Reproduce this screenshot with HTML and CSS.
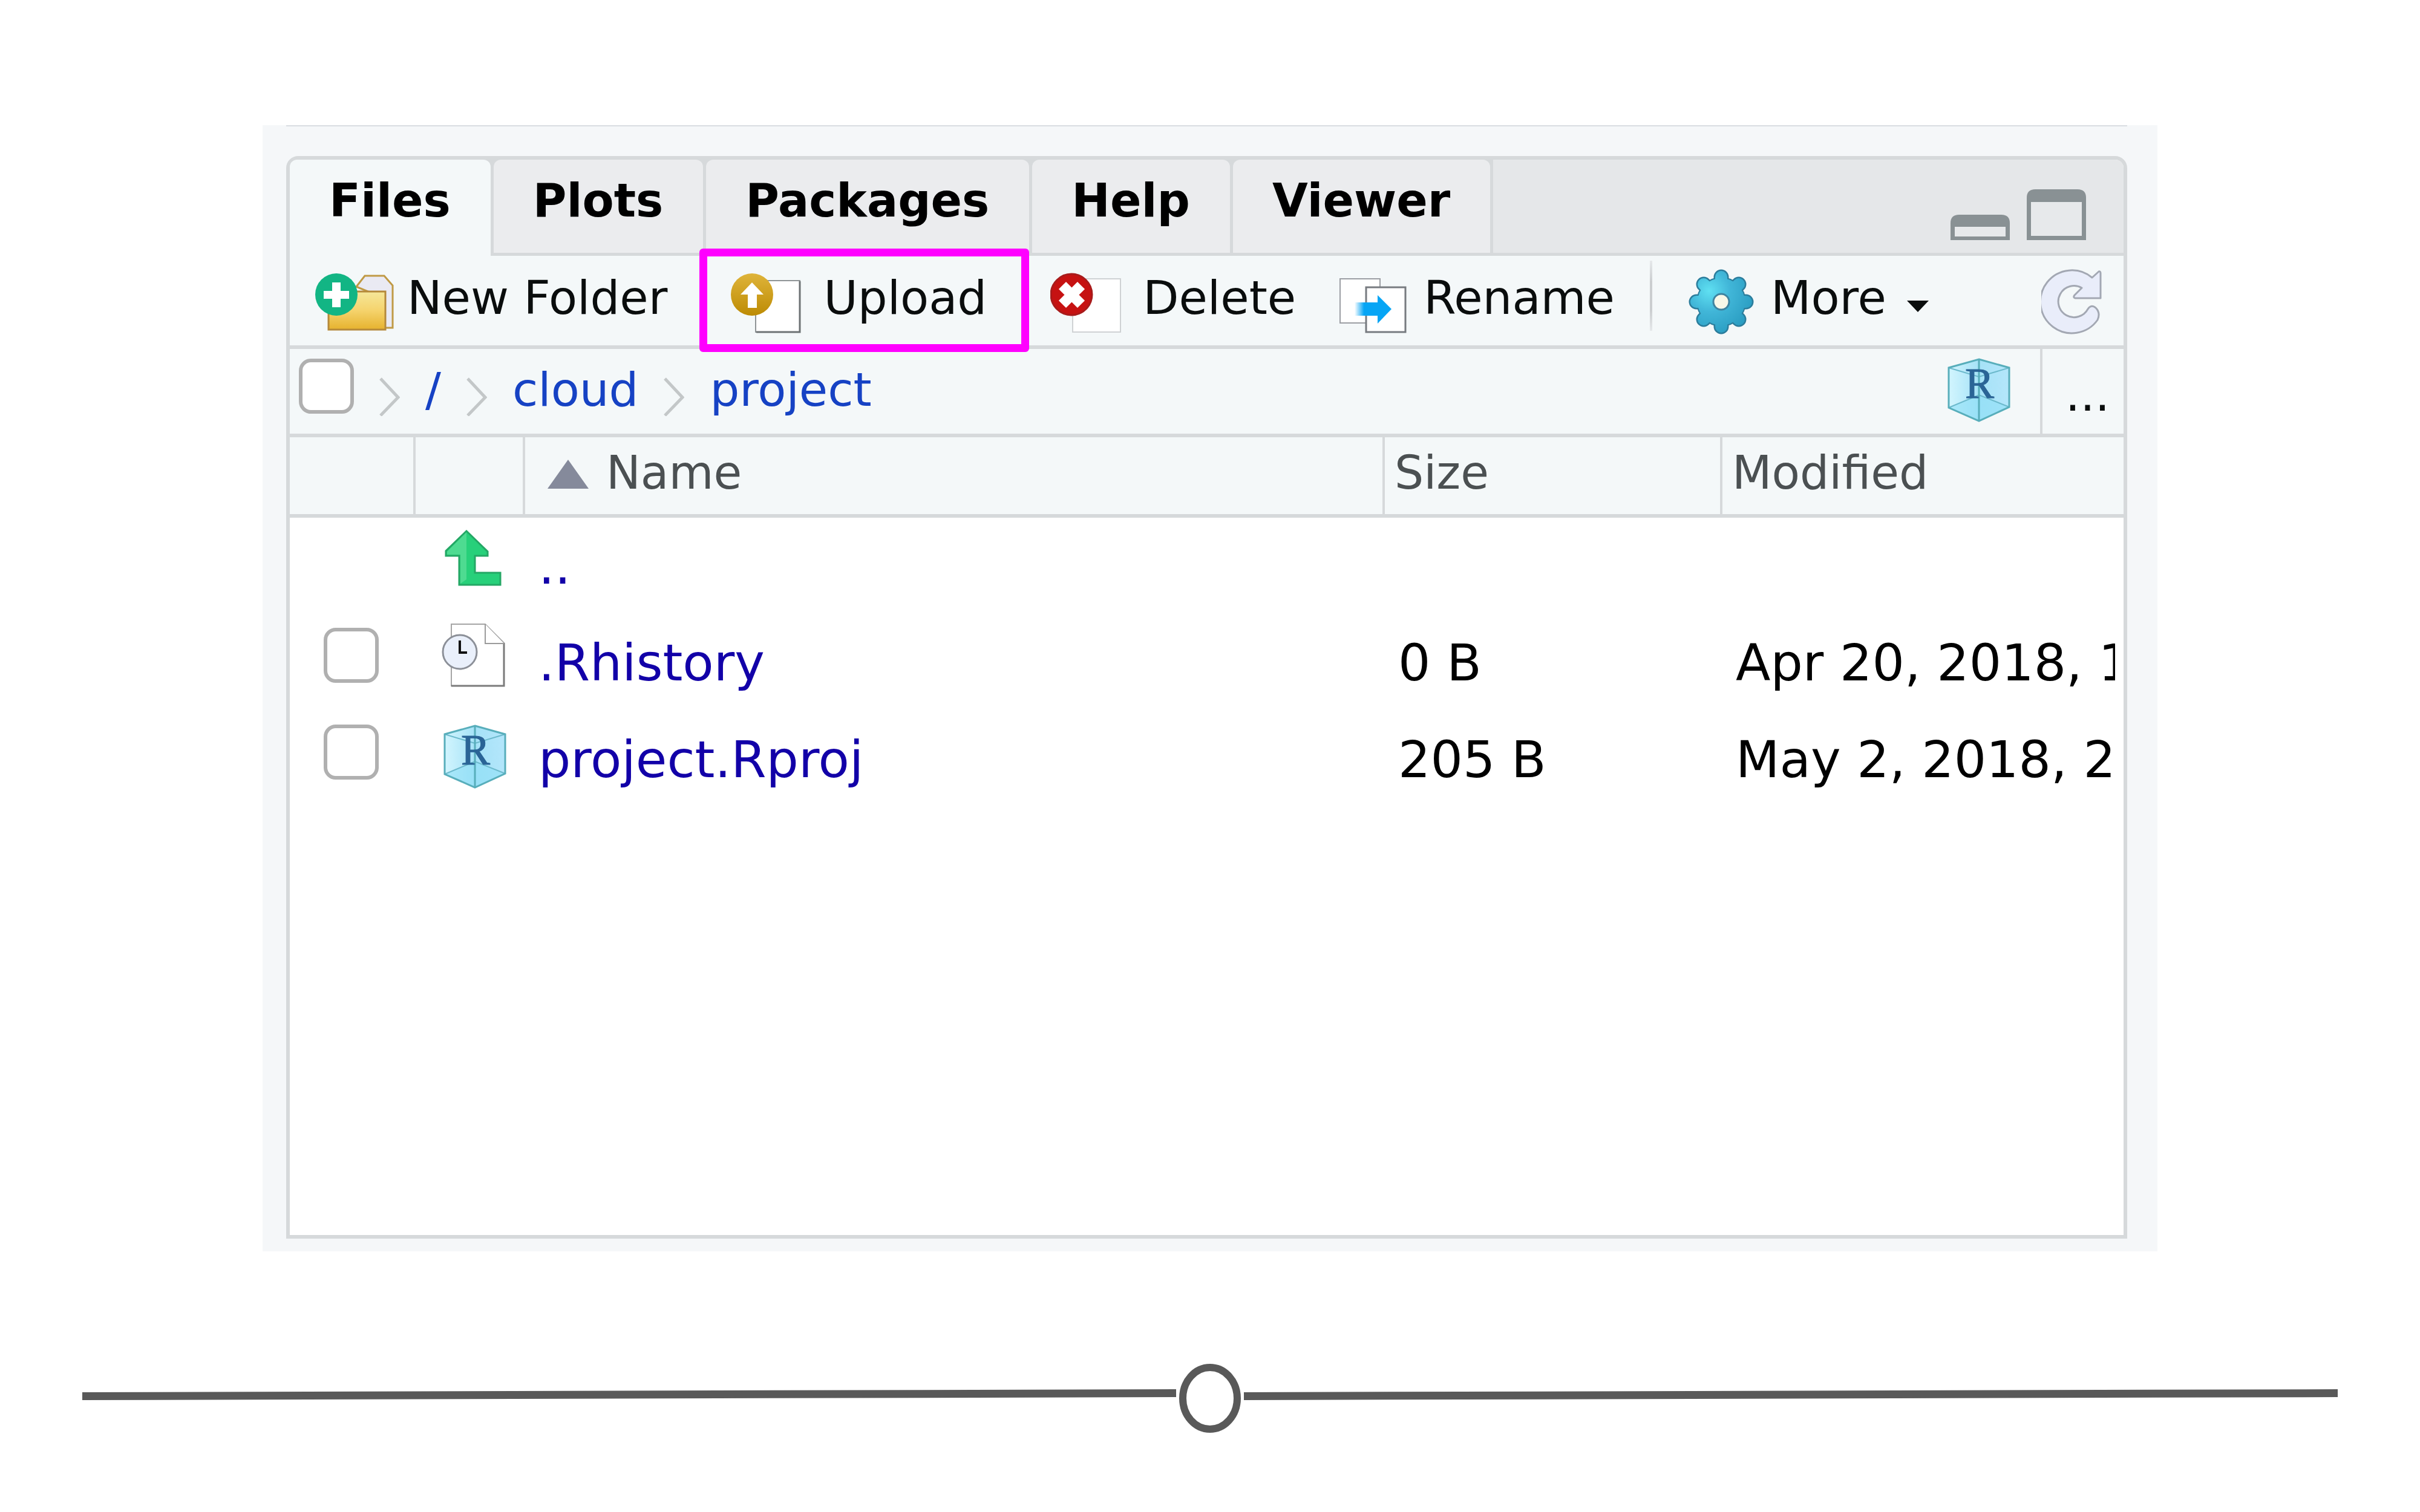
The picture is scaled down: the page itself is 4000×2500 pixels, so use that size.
FILE: index.html
```html
<!DOCTYPE html>
<html lang="en">
<head>
<meta charset="utf-8">
<title>Files pane</title>
<link rel="stylesheet" href="styles.css">
</head>
<body>
<svg class="defs" aria-hidden="true">
  <defs>
    <linearGradient id="folder" x1="0" y1="0" x2="0" y2="1"><stop offset="0" stop-color="#f5e79a"/><stop offset="0.5" stop-color="#f5d36c"/><stop offset="1" stop-color="#e6b22e"/></linearGradient>
    <linearGradient id="gold" x1="0" y1="0" x2="0" y2="1"><stop offset="0" stop-color="#dfb43a"/><stop offset="1" stop-color="#bd8b04"/></linearGradient>
    <linearGradient id="fade" x1="0" y1="0" x2="1" y2="0"><stop offset="0" stop-color="#06a5f5" stop-opacity="0"/><stop offset="0.4" stop-color="#06a5f5"/></linearGradient>
    <radialGradient id="gear" gradientUnits="userSpaceOnUse" cx="36" cy="50" r="76"><stop offset="0" stop-color="#5fe0f2"/><stop offset="0.45" stop-color="#41b6d8"/><stop offset="1" stop-color="#2a9dc2"/></radialGradient>
    <linearGradient id="ice" x1="0" y1="0" x2="1" y2="0"><stop offset="0" stop-color="#d2f5fe"/><stop offset="0.5" stop-color="#a5e2f7"/><stop offset="1" stop-color="#b4e6fb"/></linearGradient>
    <symbol id="cube" viewBox="0 0 104 106">
      <path d="M52 2 102 16V81L52 104 2 82V16Z" fill="url(#ice)"/>
      <path d="M52 61 102 81 52 104 2 82Z" fill="#8fe0f6" opacity=".6"/>
      <path d="M2 16 52 31 102 16M2 82 52 61 102 81" fill="none" stroke="#6cb9cc" stroke-width="2"/>
      <path d="M52 2 102 16V81L52 104 2 82V16ZM52 2V104" fill="none" stroke="#58aebb" stroke-width="3"/>
      <text class="cube-letter" x="53" y="66" text-anchor="middle">R</text>
    </symbol>
    <symbol id="chevron" viewBox="0 0 34 82"><path d="M2 20 31 51 2 81" fill="none" stroke="#c3c7c8" stroke-width="5"/></symbol>
  </defs>
</svg>

<main class="frame">
  <section class="pane">
    <nav class="tabs" aria-label="Panes">
      <div class="tab-slot"><button class="tab tab-active" type="button">Files</button></div>
      <div class="tab-slot"><button class="tab" type="button">Plots</button></div>
      <div class="tab-slot"><button class="tab" type="button">Packages</button></div>
      <div class="tab-slot"><button class="tab" type="button">Help</button></div>
      <div class="tab-slot"><button class="tab" type="button">Viewer</button></div>
      <div class="window-controls">
        <button type="button" aria-label="Minimize"><svg width="98" height="42" viewBox="0 0 98 42"><path d="M0 42V14Q0 0 14 0H84Q98 0 98 14V42Z" fill="#899194"/><path d="M7 20H91V36H7Z" fill="#e7e9eb"/></svg></button>
        <button type="button" aria-label="Maximize"><svg width="98" height="84" viewBox="0 0 98 84"><path d="M0 84V14Q0 0 14 0H84Q98 0 98 14V84Z" fill="#899194"/><path d="M7 21H91V77H7Z" fill="#e7e9eb"/></svg></button>
      </div>
    </nav>

    <div class="toolbar">
      <button class="tool tool-wide" type="button">
        <svg width="153" height="124" viewBox="0 0 153 124">
          <path d="M69 43 83 25H115L129 41V111H110V60Z" fill="#eaeaf3" stroke="#c09a45" stroke-width="3"/>
          <path d="M23 51H117V114H23Z" fill="url(#folder)" stroke="#b5893a" stroke-width="3"/>
          <circle cx="36" cy="56" r="35" fill="#12b584"/>
          <path d="M29 36H43V50H57V63H43V77H29V63H15V50H29Z" fill="#fff"/>
        </svg>New Folder</button>
      <button class="tool tool-wide tool-marked" type="button">
        <svg width="153" height="124" viewBox="0 0 153 124">
          <path d="M41 33H114V118H41Z" fill="#fff"/><path d="M41 33H114V118H41V33" fill="none" stroke="#8f9496" stroke-width="2"/><path d="M114 34V118H42" fill="none" stroke="#6d7274" stroke-width="3"/>
          <circle cx="35" cy="56" r="35" fill="url(#gold)"/>
          <path d="M35 36 54 56H43V78H28V56H16Z" fill="#fff"/>
        </svg>Upload</button>
      <button class="tool" type="button">
        <svg width="153" height="124" viewBox="0 0 153 124">
          <path d="M37 30H116V118H37Z" fill="#fff" stroke="#cfd2d4" stroke-width="2"/>
          <circle cx="35" cy="56" r="34" fill="#c61212" stroke="#a81c1c" stroke-width="3"/>
          <path d="M20 41 51 72M51 41 20 72" stroke="#fff" stroke-width="17"/>
        </svg>Delete</button>
      <button class="tool tool-rename" type="button">
        <svg width="139" height="124" viewBox="0 0 139 124">
          <path d="M1 30H67V103H1Z" fill="#fff" stroke="#9b9ea3" stroke-width="2"/>
          <path d="M44 44H109V118H44Z" fill="#fff" stroke="#777b80" stroke-width="3"/>
          <path d="M25 69H64V91H25Z" fill="url(#fade)"/><path d="M63 57 86 80 63 104Z" fill="#06a5f5"/>
        </svg>Rename</button>
      <span class="divider"></span>
      <button class="tool" type="button">
        <svg width="138" height="130" viewBox="0 -3 138 130">
          <g stroke="#2b7d9c" stroke-width="25" stroke-linecap="round"><path d="M56 27V109M15 68H97M27 39 85 97M85 39 27 97"/></g>
          <circle cx="56" cy="68" r="41" fill="#2b7d9c"/>
          <g stroke="url(#gear)" stroke-width="20" stroke-linecap="round"><path d="M56 27 56.1 109M15 68 97 68.1M27 39 85 97M85 39 27 97"/></g>
          <circle cx="56" cy="68" r="39" fill="url(#gear)"/>
          <circle cx="56" cy="68" r="13" fill="#f8f8e8" stroke="#3f84a0" stroke-width="3"/>
        </svg>More<svg class="caret" width="36" height="56" viewBox="0 0 36 56"><path d="M0 32H36L18 51Z" fill="#0a0d0d"/></svg></button>
      <button class="tool tool-refresh" type="button" aria-label="Refresh">
        <svg width="100" height="124" viewBox="0 0 100 124"><path d="M84 28 95 18Q98 17 98 21V62H56Q52 61 55 57L67 45A26 26 0 1 0 77 80Q83 71 91 79 98 87 93 98A52 52 0 1 1 84 28Z" fill="#e9edfa" stroke="#a3a8b3" stroke-width="3" stroke-linejoin="round"/></svg>
      </button>
    </div>

    <div class="pathbar">
      <input class="check" type="checkbox" aria-label="Select all files">
      <svg width="34" height="82"><use href="#chevron"/></svg>
      <a href="#root">/</a>
      <svg width="34" height="82"><use href="#chevron"/></svg>
      <a href="#cloud">cloud</a>
      <svg width="34" height="82"><use href="#chevron"/></svg>
      <a href="#project">project</a>
      <div class="path-actions">
        <button class="project-button" type="button" aria-label="Go to project folder"><svg width="104" height="106"><use href="#cube"/></svg></button>
        <button class="browse" type="button">...</button>
      </div>
    </div>

    <table class="files">
      <colgroup><col class="col-check"><col class="col-icon"><col class="col-name"><col class="col-size"><col></colgroup>
      <thead>
        <tr>
          <th></th><th></th>
          <th class="sorted"><svg width="68" height="48" viewBox="0 0 68 48"><path d="M34 0 68 48H0Z" fill="#858a9b"/></svg>Name</th>
          <th>Size</th><th>Modified</th>
        </tr>
      </thead>
      <tbody>
        <tr>
          <td></td>
          <td class="icon"><svg width="106" height="106" viewBox="0 0 106 106"><path d="M41 8 76 42V49H55V77H97V97H29V49H7V41Z" fill="#27d07a" stroke="#24a765" stroke-width="3"/><path d="M41 10V88L31 95V47H9V42Z" fill="#5fe09b" opacity=".7"/></svg></td>
          <td><a href="#up">..</a></td><td></td><td></td>
        </tr>
        <tr>
          <td class="select"><input class="check" type="checkbox" aria-label="Select .Rhistory"></td>
          <td class="icon"><svg width="106" height="106" viewBox="0 0 106 106"><path d="M16 2H72L103 33V104H16Z" fill="#fff" stroke="#a5a5a5" stroke-width="2"/><path d="M103 33V104H16" fill="none" stroke="#7b7b7b" stroke-width="3"/><path d="M72 2V34H103" fill="#fff" stroke="#9b9b9b" stroke-width="2"/><circle cx="30" cy="48" r="28" fill="#eaf0fb" stroke="#8c9098" stroke-width="3"/><path d="M30 29V49H42" fill="none" stroke="#111" stroke-width="4"/></svg></td>
          <td><a href="#rhistory">.Rhistory</a></td><td>0 B</td><td><div class="clip">Apr 20, 2018, 1</div></td>
        </tr>
        <tr>
          <td class="select"><input class="check" type="checkbox" aria-label="Select project.Rproj"></td>
          <td class="icon icon-project"><svg width="104" height="106"><use href="#cube"/></svg></td>
          <td><a href="#rproj">project.Rproj</a></td><td>205 B</td><td><div class="clip">May 2, 2018, 2</div></td>
        </tr>
      </tbody>
    </table>
  </section>
</main>

<footer class="rule">
  <svg class="rule-line" height="18" viewBox="0 0 100 18" preserveAspectRatio="none"><path d="M0 5 100 0V13L0 18Z" fill="#595959"/></svg>
  <svg width="102" height="114" viewBox="0 0 102 114"><ellipse cx="51" cy="57" rx="45" ry="51" fill="none" stroke="#595959" stroke-width="12"/></svg>
  <svg class="rule-line" height="18" viewBox="0 0 100 18" preserveAspectRatio="none"><path d="M0 5 100 0V13L0 18Z" fill="#595959"/></svg>
</footer>
</body>
</html>
```
FILE: styles.css
```css
* { box-sizing: border-box; }

body {
  margin: 0;
  min-height: 100vh;
  padding-top: 207px;
  background: #fff;
  color: #0a0d0d;
  font-family: "DejaVu Sans", sans-serif;
  font-size: 77px;
  line-height: 88px;
}

button {
  margin: 0;
  padding: 0;
  border: 0;
  background: none;
  color: inherit;
  font: inherit;
}

a { text-decoration: none; }
svg { display: block; flex: none; }
.defs { position: absolute; width: 0; height: 0; }

.cube-letter {
  fill: #2a6496;
  stroke: #2a6496;
  stroke-width: 1px;
  font-family: "Liberation Serif", serif;
  font-size: 72px;
}

.frame {
  margin: 0 434px;
  padding: 0 50px 21px 39px;
  background: #f5f7f9;
}

.frame::before {
  content: "";
  display: block;
  height: 2px;
  margin-bottom: 49px;
  background: #d9dde1;
}

.pane {
  min-height: 1790px;
  border: 6px solid #d6d9db;
  border-radius: 20px 20px 0 0;
  background: #fff;
}

/* Tab strip */
.tabs {
  display: flex;
  height: 159px;
  border-radius: 14px 14px 0 0;
  background: #e5e7e9;
  font-size: 76px;
}

.tab-slot { display: flex; background: #d6d9db; }

.tab {
  padding: 0 66px 18px 65px;
  margin: 0 5px 5px 0;
  border-radius: 12px 12px 0 0;
  background: #ebecee;
  color: #000;
  font-weight: bold;
}

.tab-active { margin-bottom: 0; padding-bottom: 23px; background: #f4f8f9; }

.window-controls {
  display: flex;
  flex: 1;
  justify-content: flex-end;
  align-items: flex-end;
  gap: 28px;
  padding: 0 62px 21px 0;
  border-bottom: 5px solid #d6d9db;
}

/* Toolbar */
.toolbar {
  display: flex;
  align-items: stretch;
  gap: 58px;
  height: 154px;
  padding: 0 36px 0 41px;
  border-bottom: 6px solid #d6d9db;
  background: #f4f8f9;
}

.tool {
  position: relative;
  display: flex;
  align-items: center;
  padding-bottom: 8px;
  white-space: nowrap;
}

.tool-wide { margin-right: 47px; }
.tool-rename { margin-left: 14px; }
.tool-refresh { margin-left: auto; }
.caret { margin-left: 34px; }

.tool-marked::after {
  content: "";
  position: absolute;
  inset: -12px -70px -11px -52px;
  border: 13px solid #f0f;
  border-radius: 6px;
  pointer-events: none;
}

.divider {
  width: 4px;
  margin: 8px 0 24px;
  background: linear-gradient(#e6e9eb, #cbced0 30%, #cbced0 70%, #e6e9eb);
}

/* Path bar */
.pathbar {
  display: flex;
  align-items: center;
  gap: 42px;
  height: 146px;
  padding-left: 15px;
  border-bottom: 6px solid #d6d9db;
  background: #f4f8f9;
}

.pathbar a { padding-bottom: 4px; color: #1642c4; }

.check {
  appearance: none;
  display: block;
  width: 91px;
  height: 91px;
  margin: 0;
  border: 6px solid #b0b0b0;
  border-radius: 20px;
  background: #fff;
}

.pathbar .check { margin-bottom: 18px; }

.path-actions { display: flex; align-self: stretch; margin-left: auto; }
.project-button { padding: 0 49px 4px 0; display: flex; align-items: center; }

.browse {
  width: 138px;
  padding: 12px 0 0 15px;
  border-left: 4px solid #d6d9db;
}

/* File list */
.files {
  width: 100%;
  table-layout: fixed;
  border-spacing: 0;
  font-size: 84px;
  line-height: 100px;
}

.col-check { width: 208px; }
.col-icon { width: 181px; }
.col-name { width: 1421px; }
.col-size { width: 558px; }

.files th {
  height: 133px;
  padding: 0 0 10px 16px;
  border-right: 4px solid #d6d9db;
  border-bottom: 6px solid #d6d9db;
  background: #f4f8f9;
  color: #4b5052;
  font-size: 76px;
  font-weight: normal;
  text-align: left;
}

.files th:last-child { border-right: 0; }
.files .sorted { padding-left: 37px; }
.sorted svg { display: inline-block; margin-right: 29px; }

.files td {
  height: 160px;
  padding: 0 14px 0 22px;
  color: #000;
  white-space: nowrap;
}

.files td a { color: #1200a8; }
.files .select { padding: 0 0 26px 56px; }
.files .icon { padding: 0 0 26px 43px; }
.files .icon-project { padding: 0 0 10px 46px; }
.clip { overflow: hidden; }

/* Slide rule */
.rule {
  display: flex;
  align-items: center;
  gap: 5px;
  margin-top: 186px;
  padding: 0 136px;
}

.rule-line { flex: 1 1 0; min-width: 0; margin-bottom: 12px; }
```
